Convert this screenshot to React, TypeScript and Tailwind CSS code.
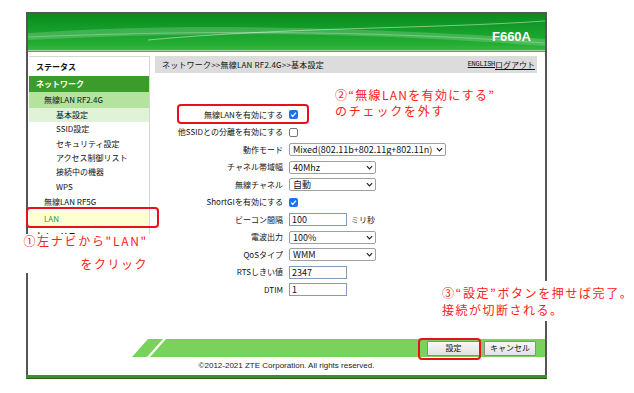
import React from 'react';

const jp = "font-['Noto_Sans_CJK_JP',sans-serif]";

function Check({ checked }: { checked: boolean }) {
  if (!checked) {
    return <span className="block w-[9px] h-[9px] rounded-[2px] border border-[#767676] bg-white" />;
  }
  return (
    <span className="flex w-[9px] h-[9px] rounded-[2px] bg-[#1a73e8] items-center justify-center">
      <svg width="7" height="7" viewBox="0 0 10 10">
        <polyline points="1.5,5.2 4,7.6 8.6,2.4" fill="none" stroke="white" strokeWidth="1.8" />
      </svg>
    </span>
  );
}

function Select({ value, width }: { value: string; width: string }) {
  return (
    <div className={`flex items-center h-[13px] border border-[#a0a0a0] rounded-[2px] bg-white pl-[3px] pr-[2px] ${width}`}>
      <span className="flex-1 overflow-hidden whitespace-nowrap text-[9px] leading-[11px] text-[#111]">{value}</span>
      <svg width="7" height="5" viewBox="0 0 8 5" className="shrink-0 ml-[2px]">
        <polyline points="1,1 4,4 7,1" fill="none" stroke="#222" strokeWidth="1.4" />
      </svg>
    </div>
  );
}

function TextBox({ value }: { value: string }) {
  return (
    <div className="h-[13px] w-[58px] border border-[#7f9db9] bg-white pl-[2px] text-[9px] leading-[11px] text-[#111]">
      {value}
    </div>
  );
}

const rows: { label: string; control: React.ReactNode }[] = [
  { label: '無線LANを有効にする', control: <Check checked /> },
  { label: '他SSIDとの分離を有効にする', control: <Check checked={false} /> },
  { label: '動作モード', control: <Select value="Mixed(802.11b+802.11g+802.11n)" width="w-[157px]" /> },
  { label: 'チャネル帯域幅', control: <Select value="40Mhz" width="w-[87px]" /> },
  { label: '無線チャネル', control: <Select value="自動" width="w-[87px]" /> },
  { label: 'ShortGIを有効にする', control: <Check checked /> },
  {
    label: 'ビーコン間隔',
    control: (
      <div className="flex items-center gap-[4px]">
        <TextBox value="100" />
        <span className="text-[8px]">ミリ秒</span>
      </div>
    ),
  },
  { label: '電波出力', control: <Select value="100%" width="w-[87px]" /> },
  { label: 'QoSタイプ', control: <Select value="WMM" width="w-[87px]" /> },
  { label: 'RTSしきい値', control: <TextBox value="2347" /> },
  { label: 'DTIM', control: <TextBox value="1" /> },
];

const subItems = ['基本設定', 'SSID設定', 'セキュリティ設定', 'アクセス制御リスト', '接続中の機器', 'WPS'];

export default function App() {
  return (
    <div className={`relative w-[634px] h-[393px] bg-white overflow-hidden ${jp} text-[#111]`}>
      {/* フレーム */}
      <div className="ml-[26px] pt-[12px] w-[521px]">
        <div className="border-l-2 border-r-2 border-t border-[#555] flex flex-col">
          {/* ヘッダー */}
          <div className="relative h-[39px] bg-[linear-gradient(to_bottom,#0a8a1d,#14a02a_45%,#26ad33_80%,#3cbb42)] flex items-end justify-end pr-[14px] pb-[6px]">
            <svg className="absolute inset-0" width="100%" height="100%" viewBox="0 0 517 39" preserveAspectRatio="none">
              <path d="M0,20 C120,12 260,10 517,26 L517,33 C300,17 150,20 0,27 Z" fill="white" opacity="0.18" />
              <path d="M120,27 C260,14 400,16 517,8" fill="none" stroke="white" strokeWidth="1" opacity="0.45" />
              <path d="M0,24 C150,18 330,16 517,30" fill="none" stroke="white" strokeWidth="0.8" opacity="0.35" />
              <line x1="0" y1="37.5" x2="517" y2="37.5" stroke="white" strokeWidth="1" opacity="0.5" />
            </svg>
            <span className="relative text-white font-bold text-[13px] font-['Liberation_Sans',sans-serif]">F660A</span>
          </div>

          {/* 本体 */}
          <div className="flex h-[287px]">
            {/* 左ナビ(注釈の下で切れている) */}
            <div className="ml-[1px] mt-[4px] w-[121px] h-[178px] overflow-hidden self-start border-t border-r border-[#d6d6d6] text-[8px]">
              <div className="h-[19px] flex items-center pl-[7px] font-bold">ステータス</div>
              <div className="h-[16px] flex items-center pl-[7px] font-bold text-white bg-[#3b9c2c]">ネットワーク</div>
              <div className="h-[16px] flex items-center pl-[15px] bg-[#b3e39d]">無線LAN RF2.4G</div>
              {subItems.map((s, i) => (
                <div key={s} className={`h-[14.33px] flex items-center pl-[27px] ${i === 0 ? 'bg-[#e1f3d6]' : ''}`}>
                  {s}
                </div>
              ))}
              <div className="h-[17px] flex items-center pl-[15px]">無線LAN RF5G</div>
              <div className="h-[17px] flex items-center pl-[15px] bg-[#ffffd4] text-[#2f9a1f]">LAN</div>
              <div className="h-[17px] flex items-center pl-[7px] font-bold">セキュリティ</div>
            </div>

            {/* 右コンテンツ */}
            <div className="ml-[5px] mt-[4px] w-[382px] flex flex-col">
              <div className="h-[17px] bg-[#dcdcdc] flex items-center justify-between pl-[7px] pr-[2px] text-[8px]">
                <span className="tracking-[0.2px]">ネットワーク&gt;&gt;無線LAN RF2.4G&gt;&gt;基本設定</span>
                <span className="flex items-center">
                  <span className="underline font-['Liberation_Mono',monospace] text-[7px] tracking-[-0.3px]">ENGLISH</span>
                  <span className="underline">ログアウト</span>
                </span>
              </div>
              <div className="mt-[33px] flex flex-col">
                {rows.map((r) => (
                  <div key={r.label} className="h-[17.5px] flex items-center">
                    <div className="w-[128px] text-right text-[8px] whitespace-nowrap">{r.label}</div>
                    <div className="ml-[6px] flex items-center">{r.control}</div>
                  </div>
                ))}
              </div>
            </div>
          </div>

          {/* フッター */}
          <div className="h-[18px] flex">
            <div className="w-[104px]" />
            <svg width="40" height="18" viewBox="0 0 40 18" className="shrink-0">
              <polygon points="0,18 16,0 31,0 15,18" fill="#79d25b" />
              <polygon points="18,18 34,0 40,0 40,18" fill="#79d25b" />
            </svg>
            <div className="flex-1 bg-[#79d25b] flex items-center justify-end gap-[4px] pr-[9px]">
              <div className="w-[53px] h-[15px] border border-[#8a8a8a] rounded-[1px] bg-[linear-gradient(to_bottom,#f7f7f7,#e2e2e2)] flex items-center justify-center text-[8px]">
                設定
              </div>
              <div className="w-[52px] h-[15px] border border-[#8a8a8a] rounded-[1px] bg-[linear-gradient(to_bottom,#f7f7f7,#e2e2e2)] flex items-center justify-center text-[8px]">
                キャンセル
              </div>
            </div>
          </div>
          <div className="h-[18px] flex items-center justify-center text-[8px] text-[#222] font-['Liberation_Sans',sans-serif]">
            ©2012-2021 ZTE Corporation. All rights reserved.
          </div>
        </div>
        <div className="h-[4px] bg-[#3e8e2e] border-b border-[#2c5e22]" />
      </div>

      {/* 注釈: 赤枠 */}
      <div className="absolute left-[177px] top-[104px] w-[132px] h-[20px] border-2 border-[#e8101e] rounded-[4px]" />
      <div className="absolute left-[26px] top-[207px] w-[133px] h-[21px] border-2 border-[#e8101e] rounded-[4px]" />
      <div className="absolute left-[418px] top-[338px] w-[63px] h-[22px] border-2 border-[#e8101e] rounded-[4px]" />

      {/* 注釈: 文字 */}
      <div className="absolute left-[335px] top-[87px] text-[12px] leading-[16px] tracking-[1.3px] text-[#ff2020]">
        <div>②“無線LANを有効にする”</div>
        <div className="tracking-[1.8px]">のチェックを外す</div>
      </div>

      <div className="absolute left-[18px] top-[234px] w-[132px] h-[39px] bg-white" />
      <div className="absolute left-[18px] top-[229px] w-[130px] text-right text-[12px] leading-[23px] tracking-[1.7px] text-[#ff2020]">
        <div>①左ナビから"LAN"</div>
        <div className="tracking-[1.5px]">をクリック</div>
      </div>

      <div className="absolute left-[438px] top-[281px] w-[196px] h-[40px] bg-white" />
      <div className="absolute left-[442px] top-[284px] text-[12px] leading-[17px] tracking-[1.6px] text-[#ff2020]">
        <div>③“設定”ボタンを押せば完了。</div>
        <div className="tracking-[1.5px]">接続が切断される。</div>
      </div>
    </div>
  );
}
